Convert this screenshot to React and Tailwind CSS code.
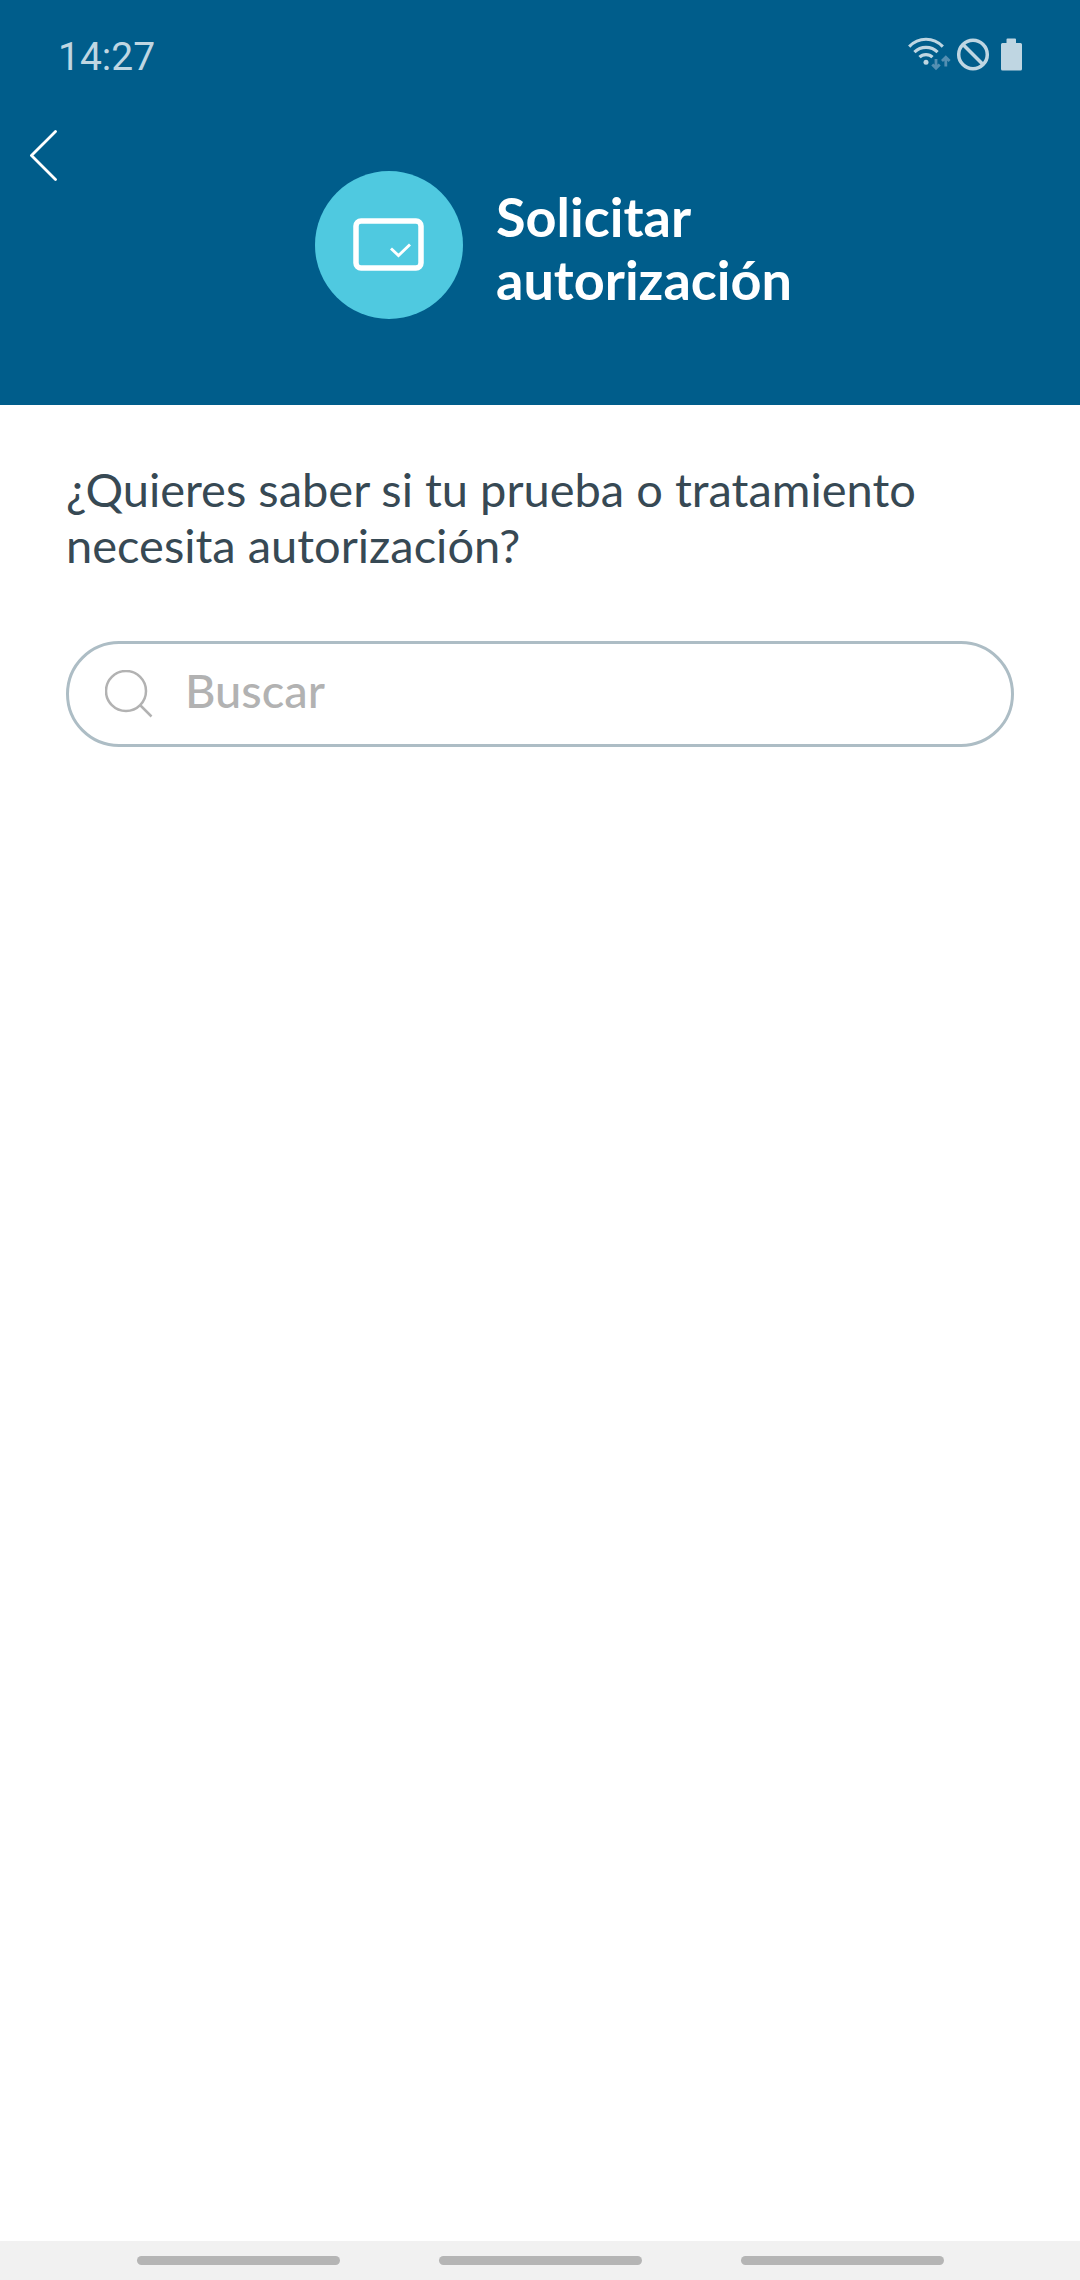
const NAV_KEYS = ["Recientes", "Inicio", "Atrás"];

function StatusIcons() {
  return (
    <svg width="114" height="34" viewBox="0 0 114 34" fill="none" aria-hidden="true">
      <g stroke="#bfd6e2" strokeWidth="3.1">
        <path d="M1.2 9.6C10.5 -.2 25.500 -.2 34.8 9.6" />
        <path d="M6.4 15.2C12.800 8.8 23.200 8.8 29.6 15.2" />
        <path d="M11.500 20.2C15 16.7 21 16.7 24.5 20.2" />
      </g>
      <circle cx="18" cy="25.3" r="2.500" fill="#bfd6e2" />
      <g stroke="#548fb2" strokeWidth="2.800">
        <path d="M28 22v9M24.3 27.5L28 31.3l3.7-3.8" />
        <path d="M37.800 29.5v-9M34 24l3.8-3.8L41.6 24" />
      </g>
      <circle cx="65" cy="17.500" r="14.300" stroke="#bfd6e2" strokeWidth="3.500" />
      <path d="M55 7.500l20 20" stroke="#bfd6e2" strokeWidth="3.500" />
      <path
        d="M99.500 1.500h7.500a1 1 0 0 1 1 1V6h4.500a1.500 1.500 0 0 1 1.500 1.500V32a1.500 1.500 0 0 1-1.500 1.500h-18A1.500 1.500 0 0 1 93 32V7.500A1.500 1.500 0 0 1 94.500 6h4V2.500a1 1 0 0 1 1-1z"
        fill="#bfd6e2"
      />
    </svg>
  );
}

function CardCheckIcon() {
  return (
    <svg width="72" height="54" viewBox="0 0 72 54" fill="none" stroke="#fff" aria-hidden="true">
      <rect x="3" y="3" width="65" height="47" rx="5" strokeWidth="5.500" />
      <path d="M38 30.500L45.500 37.500L57 26.500" strokeWidth="2.900" />
    </svg>
  );
}

export default function App() {
  return (
    <div className="flex min-h-screen flex-col bg-white font-['Lato',sans-serif]">
      <header className="bg-[#005d8b] pb-[86px] text-white">
        <div className="flex h-28 items-center justify-between px-[58px] font-['Roboto',sans-serif] text-[39px] text-[#bfd6e2]">
          <time className="pt-0.5">14:27</time>
          <div className="pb-1">
            <StatusIcons />
          </div>
        </div>
        <div className="flex items-start">
          <button type="button" aria-label="Volver" className="flex h-[87px] w-[87px] shrink-0 items-center justify-center">
            <svg width="28" height="52" viewBox="0 0 28 52" fill="none" stroke="#fff" strokeWidth="2.800" strokeLinecap="round" aria-hidden="true">
              <path d="M25.500 1.500L1.500 25.500L25.500 49.500" />
            </svg>
          </button>
          <div className="ml-[228px] flex items-center gap-[33px] pt-[59px]">
            <div className="flex h-[148px] w-[148px] shrink-0 items-center justify-center rounded-full bg-[#4fc9e0]">
              <CardCheckIcon />
            </div>
            <h1 className="pt-1.5 text-[54px] leading-[63px] font-bold">
              Solicitar
              <br />
              autorización
            </h1>
          </div>
        </div>
      </header>

      <main className="flex flex-1 flex-col gap-[68px] px-[66px] pt-14">
        <label htmlFor="buscar" className="text-[47px] leading-[56px] text-[#374954]">
          ¿Quieres saber si tu prueba o tratamiento necesita autorización?
        </label>
        <div className="flex h-[106px] items-center gap-8 rounded-full border-3 border-[#adbdc5] pr-8 pl-9">
          <svg width="48" height="48" viewBox="0 0 48 48" fill="none" stroke="#b2b2b2" strokeWidth="2.500" className="shrink-0" aria-hidden="true">
            <circle cx="21" cy="21" r="20" />
            <path d="M35 35L46.500 46.500" />
          </svg>
          <input
            id="buscar"
            type="search"
            placeholder="Buscar"
            className="min-w-0 flex-1 bg-transparent pb-2 text-[47px] leading-[56px] font-medium text-[#374954] outline-none placeholder:text-[#b2b2b2]"
          />
        </div>
      </main>

      <nav className="flex h-[39px] items-center justify-center gap-[99px] bg-[#f1f1f1]">
        {NAV_KEYS.map((key) => (
          <button key={key} type="button" aria-label={key} className="h-[9px] w-[203px] rounded-full bg-[#b5b5b5]" />
        ))}
      </nav>
    </div>
  );
}
